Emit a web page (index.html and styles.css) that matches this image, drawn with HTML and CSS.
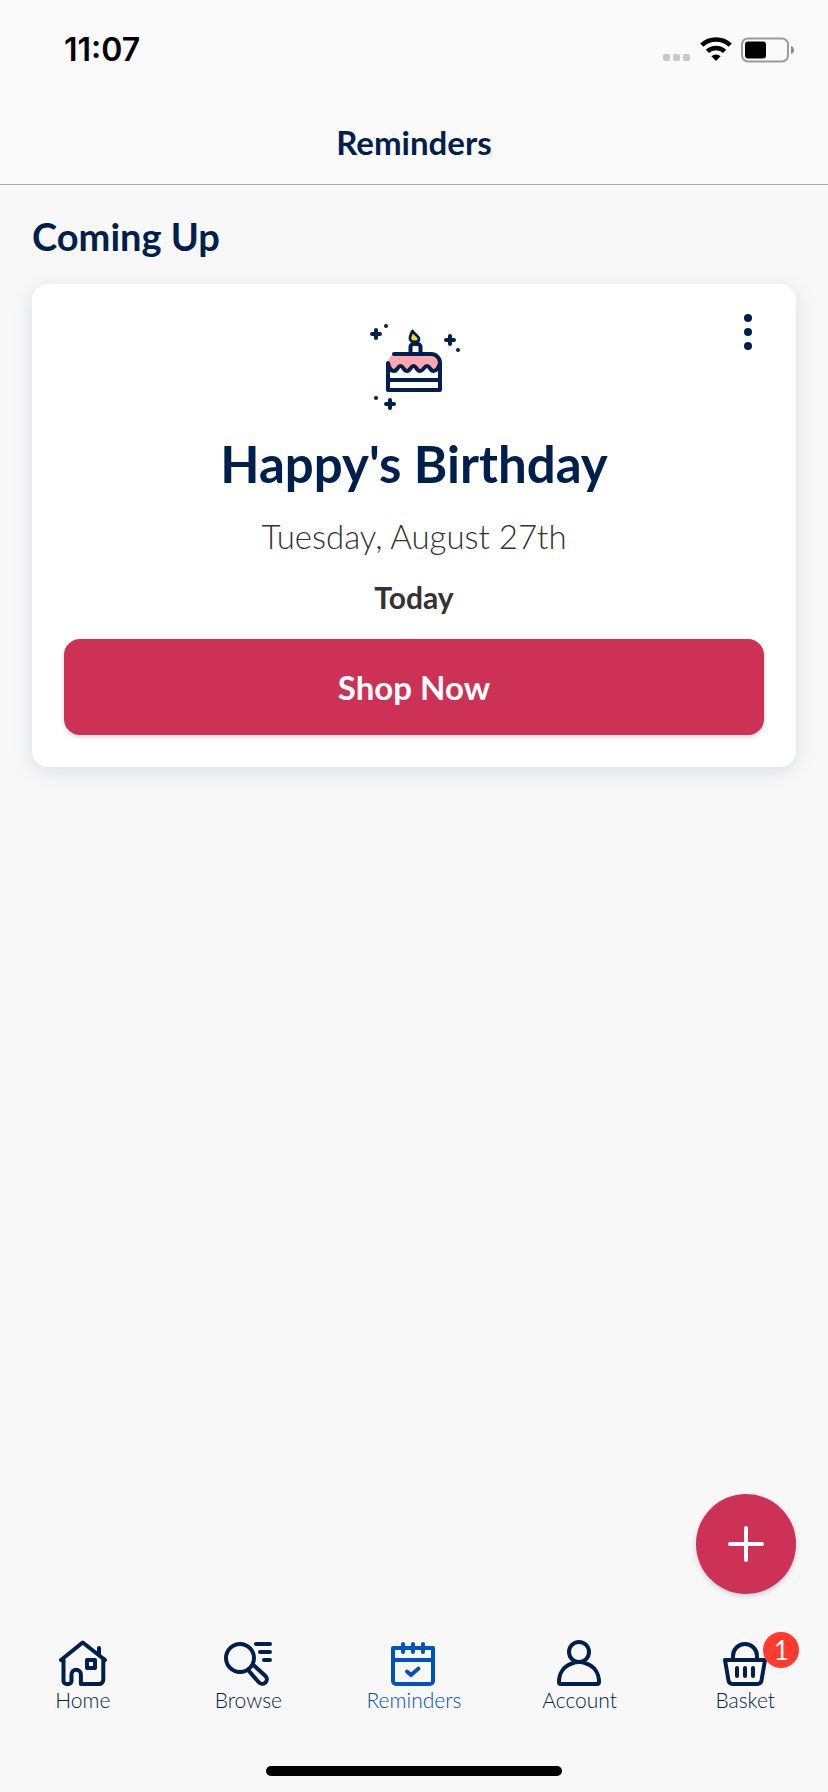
FILE: index.html
```html
<!DOCTYPE html>
<html lang="en">
<head>
<meta charset="utf-8">
<meta name="viewport" content="width=device-width, initial-scale=1">
<title>Reminders</title>
<link rel="stylesheet" href="styles.css">
</head>
<body>
<div class="app">
  <header class="header">
    <div class="status">
      <time class="clock">11:07</time>
      <div class="indicators">
        <svg width="28" height="26" viewBox="0 0 28 26" fill="#c8c8c8" aria-hidden="true"><rect x="0" y="17" width="7" height="7" rx="2"/><rect x="10" y="17" width="7" height="7" rx="2"/><rect x="20" y="17" width="7" height="7" rx="2"/></svg>
        <svg width="32" height="26" viewBox="0 0 32 26" aria-hidden="true"><g fill="none" stroke="#000" stroke-width="4.6"><path d="M1.8 8.2a20.6 20.6 0 0 1 28.4 0"/><path d="M7.4 14.4a12.6 12.6 0 0 1 17.2 0"/></g><path d="M11.4 19.3a6.6 6.6 0 0 1 9.2 0L16 24z"/></svg>
        <svg width="54" height="26" viewBox="0 0 54 26" aria-hidden="true"><rect x="1" y="1.5" width="46" height="23" rx="6" fill="none" stroke="#9a9a9a" stroke-width="2"/><rect x="4" y="4.5" width="21" height="17" rx="3"/><path d="M50 9c4 1 4 7 0 8z" fill="#8c8c8c"/></svg>
      </div>
    </div>
    <h1 class="screen-title">Reminders</h1>
  </header>

  <main class="main">
    <h2 class="section-title">Coming Up</h2>
    <article class="card">
      <button class="more" type="button" aria-label="More options">
        <svg width="8" height="36" viewBox="0 0 8 36" fill="currentColor"><circle cx="4" cy="4" r="4"/><circle cx="4" cy="18" r="4"/><circle cx="4" cy="32" r="4"/></svg>
      </button>
      <svg class="cake" width="96" height="96" viewBox="0 0 96 96" fill="none" stroke="currentColor" stroke-width="4" stroke-linecap="round" stroke-linejoin="round" aria-hidden="true">
        <path d="M28 34H66c5 0 8 4 8 9c-1 4-3 8-6.5 8S64 46 61 46s-3.500 5-7 5-3.500-5-6.500-5-3 5-6.500 5c-3.500 0-3.500-5-6.500-5s-3 5-6.500 5c-3 0-5-3-6-8 1-5 3-9 6-9z" fill="#ffa6ae" stroke="none"/>
        <path d="M28 34H65c5 0 9 4 9 9V70H22V43c1 5 3 8 6 8 3.500 0 3.500-5 6.500-5s3 5 6.500 5 3.500-5 6.500-5 3 5 6.500 5 4-5 7-5 3 5 6.500 5c3 0 5.500-4 6.500-8"/>
        <path d="M22 60H74M44.500 34V27a3 3 0 0 1 3-3h4a3 3 0 0 1 3 3v7"/>
        <path d="M46.500 11c-2 4-3 6-2.500 8 1 4 9 4 9 0 0-3-4-4-6.500-8z" fill="#ffd43b" stroke-width="2.800"/>
        <path d="M10 10v8M6 14h8M84 16v8M80 20h8M24 80v8M20 84h8"/>
        <g fill="currentColor" stroke="none"><circle cx="20" cy="6" r="2"/><circle cx="92" cy="30" r="2"/><circle cx="10" cy="78" r="2"/></g>
      </svg>
      <h3 class="event">Happy's Birthday</h3>
      <p class="date">Tuesday, August 27th</p>
      <p class="when">Today</p>
      <button class="shop" type="button">Shop Now</button>
    </article>
    <button class="fab" type="button" aria-label="Add reminder">
      <svg width="36" height="36" viewBox="0 0 36 36" stroke="currentColor" stroke-width="4" stroke-linecap="round"><path d="M18 2v32M2 18h32"/></svg>
    </button>
  </main>

  <footer class="footer">
    <nav class="tabs">
      <a class="tab" href="#home">
        <svg class="tab-icon" viewBox="0 0 48 48"><path d="M2 20L23.700 2.500 46 20M40 8v7M4.500 18.500V41a3 3 0 0 0 3 3h2a3 3 0 0 0 3-3V34.500a4.700 4.700 0 0 1 9.400 0V44H40a4.300 4.300 0 0 0 4.300-4.300V18.500"/><path d="M28 20h8v8h-8z"/></svg>
        <span>Home</span>
      </a>
      <a class="tab" href="#browse">
        <svg class="tab-icon" viewBox="0 0 48 48"><circle cx="16" cy="18" r="14"/><path d="M32 4H46M36 12H46M40 20H46M24.500 30.500L34.800 42.300A4.500 4.500 0 0 0 41.700 36.300L30 25.500"/></svg>
        <span>Browse</span>
      </a>
      <a class="tab tab-active" href="#reminders" aria-current="page">
        <svg class="tab-icon" viewBox="0 0 48 48"><path d="M3 8H43V41a3 3 0 0 1-3 3H6a3 3 0 0 1-3-3zM3 20H43M13 4v8M23 4v8M33 4v8M17 31.500l4 3.500 7.500-6.500"/></svg>
        <span>Reminders</span>
      </a>
      <a class="tab" href="#account">
        <svg class="tab-icon" viewBox="0 0 48 48"><circle cx="23" cy="12" r="10"/><path d="M16 23.500C8 26 3 33 3 42a2 2 0 0 0 2 2H41a2 2 0 0 0 2-2c0-9-5-16-13-18.500-5-2-9-2-14 0z"/></svg>
        <span>Account</span>
      </a>
      <a class="tab" href="#basket">
        <span class="basket">
          <svg class="tab-icon" viewBox="0 0 48 48"><path d="M12 19V16a12 12 0 0 1 24 0v3M4 20H44L40.500 40.500A4 4 0 0 1 36.500 44H11.500A4 4 0 0 1 7.500 40.500zM16 28v8M24 28v8M32 28v8"/></svg>
          <span class="badge">1</span>
        </span>
        <span>Basket</span>
      </a>
    </nav>
    <div class="home-bar"></div>
  </footer>
</div>
</body>
</html>
```
FILE: styles.css
```css
* { box-sizing: border-box; }

body {
  margin: 0;
  background: #f8f8f8;
  color: #001f4c;
  font-family: Lato, "Open Sans", sans-serif;
}

h1, h2, h3, p { margin: 0; }

button {
  border: 0;
  padding: 0;
  font-family: inherit;
  cursor: pointer;
}

svg { display: block; }

.app {
  display: flex;
  flex-direction: column;
  min-height: 100vh;
}

.header {
  background: #fafafa;
  border-bottom: 1px solid #adadad;
}

.status {
  display: flex;
  align-items: center;
  justify-content: space-between;
  height: 100px;
  padding: 0 33px 0 64px;
  color: #000;
}

.clock {
  font-family: Inter, "Liberation Sans", sans-serif;
  font-size: 32px;
  font-weight: 600;
  line-height: 40px;
}

.indicators {
  display: flex;
  gap: 9px;
}

.screen-title {
  font-size: 33px;
  font-weight: 700;
  line-height: 84px;
  text-align: center;
}

.main {
  position: relative;
  flex: 1;
  padding: 31px 32px 160px;
}

.section-title {
  margin-bottom: 28px;
  font-size: 38px;
  font-weight: 700;
  line-height: 40px;
}

.card {
  position: relative;
  display: flex;
  flex-direction: column;
  align-items: center;
  padding: 36px 32px 32px;
  border-radius: 16px;
  background: #fff;
  box-shadow: 0 4px 20px rgba(0, 31, 76, 0.12);
  text-align: center;
}

.more {
  position: absolute;
  top: 20px;
  right: 32px;
  display: grid;
  place-items: center;
  width: 32px;
  height: 56px;
  background: none;
  color: inherit;
}

.event {
  margin-top: 20px;
  font-size: 51px;
  font-weight: 700;
  line-height: 56px;
}

.date {
  margin-top: 24px;
  color: #333;
  font-size: 33px;
  font-weight: 300;
  line-height: 40px;
}

.when {
  margin-top: 25px;
  color: #333;
  font-size: 30px;
  font-weight: 700;
  line-height: 32px;
}

.shop {
  align-self: stretch;
  height: 96px;
  margin-top: 26px;
  border-radius: 16px;
  background: #cd3256;
  box-shadow: 0 2px 4px rgba(0, 31, 76, 0.2);
  color: #fff;
  font-size: 33px;
  font-weight: 700;
}

.fab {
  position: absolute;
  right: 32px;
  bottom: 32px;
  display: grid;
  place-items: center;
  width: 100px;
  height: 100px;
  border-radius: 50%;
  background: #cd3256;
  box-shadow: 0 2px 5px rgba(0, 31, 76, 0.2);
  color: #fff;
}

.footer {
  padding: 14px 0 16px;
}

.tabs {
  display: grid;
  grid-template-columns: repeat(5, 1fr);
}

.tab {
  display: flex;
  flex-direction: column;
  align-items: center;
  color: #001f4c;
  font-size: 21px;
  font-weight: 300;
  line-height: 24px;
  text-decoration: none;
}

.tab-active { color: #0052bd; }

.tab-icon {
  width: 48px;
  height: 48px;
  fill: none;
  stroke: currentColor;
  stroke-width: 4;
  stroke-linecap: round;
  stroke-linejoin: round;
}

.basket { position: relative; }

.badge {
  position: absolute;
  top: -8px;
  right: -30px;
  width: 36px;
  height: 36px;
  border-radius: 50%;
  background: #ff3b30;
  color: #fff;
  font-size: 26px;
  font-weight: 400;
  line-height: 36px;
  text-align: center;
}

.home-bar {
  width: 296px;
  height: 10px;
  margin: 54px auto 0;
  border-radius: 5px;
  background: #000;
}
```
